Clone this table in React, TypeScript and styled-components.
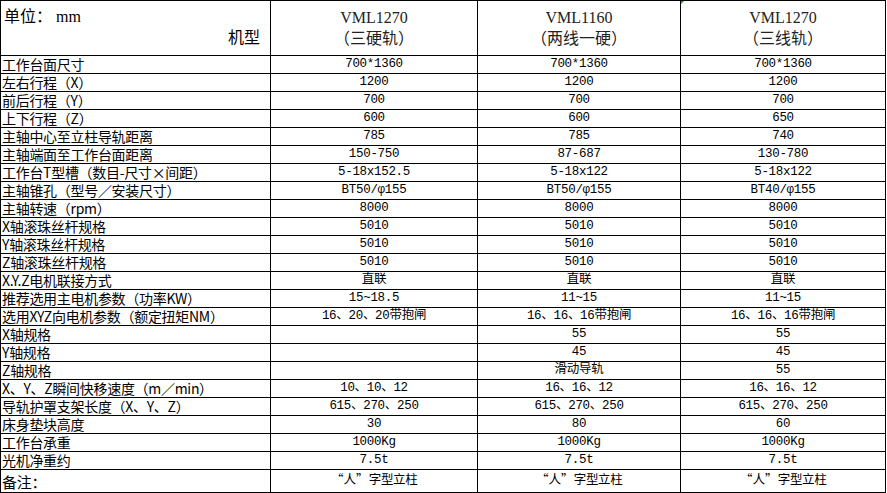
import React from "react";
import styled, { createGlobalStyle } from "styled-components";

const GlobalStyle = createGlobalStyle`
  html, body {
    margin: 0;
    padding: 0;
    background: #ffffff;
  }
  body {
    font-family: "Noto Sans CJK SC", "Liberation Sans", sans-serif;
    color: #000;
  }
`;

const Sheet = styled.div`
  display: grid;
  grid-template-columns: 269px 206px 202px 204px;
  grid-template-rows: 54px repeat(23, 17px) 22px;
  gap: 1px;
  padding: 1px;
  background: #000;
  width: max-content;
`;

const Cell = styled.div`
  background: #fff;
  overflow: hidden;
  white-space: nowrap;
  display: flex;
`;

const CornerCell = styled(Cell)`
  flex-direction: column;
  justify-content: flex-start;
  padding: 6px 10px 0 3px;
  font-family: "Liberation Serif", "Noto Sans CJK SC", serif;
  font-size: 16px;
  line-height: 20px;
`;

const Unit = styled.div`
  align-self: flex-start;
`;

const ModelLabel = styled.div`
  align-self: flex-end;
  margin-top: 1px;
`;

const ModelCell = styled(Cell)`
  position: relative;
  flex-direction: column;
  align-items: center;
  padding-top: 6px;
  font-family: "Liberation Serif", "Noto Sans CJK SC", serif;
  font-size: 16px;
  line-height: 21px;
  color: #222;
`;

const Flag = styled.span`
  position: absolute;
  top: 0;
  left: -1px;
  width: 0;
  height: 0;
  border-top: 4px solid #1f9b2e;
  border-right: 4px solid transparent;
`;

const LabelCell = styled(Cell)<{ $tall?: boolean }>`
  align-items: flex-end;
  padding-left: 1px;
  font-family: "Noto Sans CJK SC", "Liberation Sans", sans-serif;
  font-size: ${(p) => (p.$tall ? "15px" : "14px")};
  line-height: 17px;
  padding-bottom: ${(p) => (p.$tall ? "2px" : "0")};
  letter-spacing: -0.3px;
`;

const ValueCell = styled(Cell)<{ $tall?: boolean }>`
  align-items: flex-end;
  justify-content: center;
  font-family: "Liberation Mono", "Noto Sans CJK SC", monospace;
  font-size: 12.5px;
  line-height: 15px;
  padding-bottom: ${(p) => (p.$tall ? "3px" : "1px")};
  letter-spacing: -0.3px;
`;

const Quote = styled.span`
  display: inline-block;
  width: 13px;
  text-align: center;
  font-family: "Noto Sans CJK SC", sans-serif;
`;

type Row = [string, string, string, string];

const rows: Row[] = [
  ["工作台面尺寸", "700*1360", "700*1360", "700*1360"],
  ["左右行程（X）", "1200", "1200", "1200"],
  ["前后行程（Y）", "700", "700", "700"],
  ["上下行程（Z）", "600", "600", "650"],
  ["主轴中心至立柱导轨距离", "785", "785", "740"],
  ["主轴端面至工作台面距离", "150-750", "87-687", "130-780"],
  ["工作台T型槽（数目-尺寸×间距）", "5-18x152.5", "5-18x122", "5-18x122"],
  ["主轴锥孔（型号／安装尺寸）", "BT50/φ155", "BT50/φ155", "BT40/φ155"],
  ["主轴转速（rpm）", "8000", "8000", "8000"],
  ["X轴滚珠丝杆规格", "5010", "5010", "5010"],
  ["Y轴滚珠丝杆规格", "5010", "5010", "5010"],
  ["Z轴滚珠丝杆规格", "5010", "5010", "5010"],
  ["X.Y.Z电机联接方式", "直联", "直联", "直联"],
  ["推荐选用主电机参数（功率KW）", "15~18.5", "11~15", "11~15"],
  ["选用XYZ向电机参数（额定扭矩NM）", "16、20、20带抱闸", "16、16、16带抱闸", "16、16、16带抱闸"],
  ["X轴规格", "", "55", "55"],
  ["Y轴规格", "", "45", "45"],
  ["Z轴规格", "", "滑动导轨", "55"],
  ["X、Y、Z瞬间快移速度（m／min）", "10、10、12", "16、16、12", "16、16、12"],
  ["导轨护罩支架长度（X、Y、Z）", "615、270、250", "615、270、250", "615、270、250"],
  ["床身垫块高度", "30", "80", "60"],
  ["工作台承重", "1000Kg", "1000Kg", "1000Kg"],
  ["光机净重约", "7.5t", "7.5t", "7.5t"],
];

const models: [string, string][] = [
  ["VML1270", "（三硬轨）"],
  ["VML1160", "（两线一硬）"],
  ["VML1270", "（三线轨）"],
];

function Remark() {
  return (
    <span>
      <Quote>“</Quote>人<Quote>”</Quote>字型立柱
    </span>
  );
}

export default function App() {
  return (
    <>
      <GlobalStyle />
      <Sheet>
        <CornerCell>
          <Unit>单位： mm</Unit>
          <ModelLabel>机型</ModelLabel>
        </CornerCell>
        {models.map(([name, kind], i) => (
          <ModelCell key={i}>
            {i === 2 && <Flag />}
            <div>{name}</div>
            <div>{kind}</div>
          </ModelCell>
        ))}
        {rows.map((r, ri) => (
          <React.Fragment key={ri}>
            <LabelCell>{r[0]}</LabelCell>
            <ValueCell>{r[1]}</ValueCell>
            <ValueCell>{r[2]}</ValueCell>
            <ValueCell>{r[3]}</ValueCell>
          </React.Fragment>
        ))}
        <LabelCell $tall>备注：</LabelCell>
        <ValueCell $tall>
          <Remark />
        </ValueCell>
        <ValueCell $tall>
          <Remark />
        </ValueCell>
        <ValueCell $tall>
          <Remark />
        </ValueCell>
      </Sheet>
    </>
  );
}
